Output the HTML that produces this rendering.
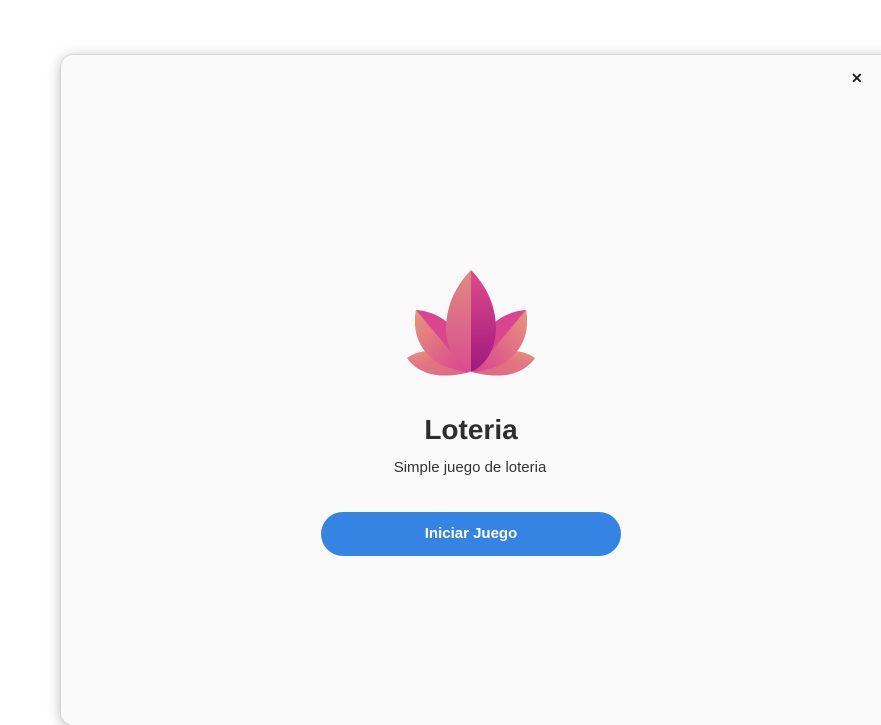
<!DOCTYPE html>
<html><head><meta charset="utf-8">
<style>
html,body{margin:0;padding:0;width:881px;height:705px;background:#fff;overflow:hidden;font-family:"Liberation Sans",sans-serif}
.win{position:absolute;left:61px;top:55px;width:840px;height:670px;background:#fafafa;border-radius:12px;box-shadow:0 2px 14px rgba(0,0,0,.28),0 0 0 1px rgba(0,0,0,.06)}
.close{position:absolute;left:851px;top:70px;font-size:14px;font-weight:bold;color:#222}
h1{position:absolute;left:0;width:942px;top:414px;margin:0;text-align:center;font-size:28px;font-weight:bold;color:#2e2e2e}
.sub{position:absolute;left:0;width:940px;top:459px;text-align:center;font-size:15px;color:#333}
.btn{position:absolute;left:321px;top:512px;width:300px;height:44px;border-radius:22px;background:#3584e4;color:#fff;font-weight:bold;font-size:15px;line-height:44px;text-align:center}
svg{position:absolute;left:0;top:0}
</style></head><body>
<div class="win"></div>
<div class="close">✕</div>
<svg width="881" height="705">
<defs>
<linearGradient id="a" x1="0" y1="0" x2="1" y2="1"><stop offset="0" stop-color="#e8967a"/><stop offset="1" stop-color="#d9428e"/></linearGradient>
<linearGradient id="b" x1="0" y1="0" x2="0" y2="1"><stop offset="0" stop-color="#e04c8a"/><stop offset="1" stop-color="#a0187e"/></linearGradient>
<linearGradient id="c" x1="0" y1="0" x2="0" y2="1"><stop offset="0" stop-color="#e08a80"/><stop offset="1" stop-color="#d94c90"/></linearGradient>
<linearGradient id="d" x1="1" y1="0" x2="0" y2="1"><stop offset="0" stop-color="#e8967a"/><stop offset="1" stop-color="#d9428e"/></linearGradient>
</defs>
<!-- lower side petals -->
<path d="M407 358 C425 345 455 350 470 372 C440 380 418 374 407 358Z" fill="url(#a)"/>
<path d="M407 358 L470 372 C440 380 418 374 407 358Z" fill="#e07a86" opacity=".6"/>
<path d="M535 358 C517 345 487 350 472 372 C502 380 524 374 535 358Z" fill="url(#d)"/>
<path d="M535 358 L472 372 C502 380 524 374 535 358Z" fill="#e07a86" opacity=".6"/>
<!-- upper side petals -->
<path d="M416 310 C445 312 468 335 468 372 C432 368 410 345 416 310Z" fill="#d9458f"/>
<path d="M416 310 L468 372 C432 368 410 345 416 310Z" fill="url(#a)"/>
<path d="M526 310 C497 312 474 335 474 372 C510 368 532 345 526 310Z" fill="#d9458f"/>
<path d="M526 310 L474 372 C510 368 532 345 526 310Z" fill="url(#d)"/>
<!-- center petal -->
<path d="M471 270 C452 290 446 310 446 330 C447 352 458 366 471 372Z" fill="url(#c)"/>
<path d="M471 270 C490 290 496 310 496 330 C495 352 484 366 471 372Z" fill="url(#b)"/>
</svg>
<h1>Loteria</h1>
<div class="sub">Simple juego de loteria</div>
<div class="btn">Iniciar Juego</div>
</body></html>
